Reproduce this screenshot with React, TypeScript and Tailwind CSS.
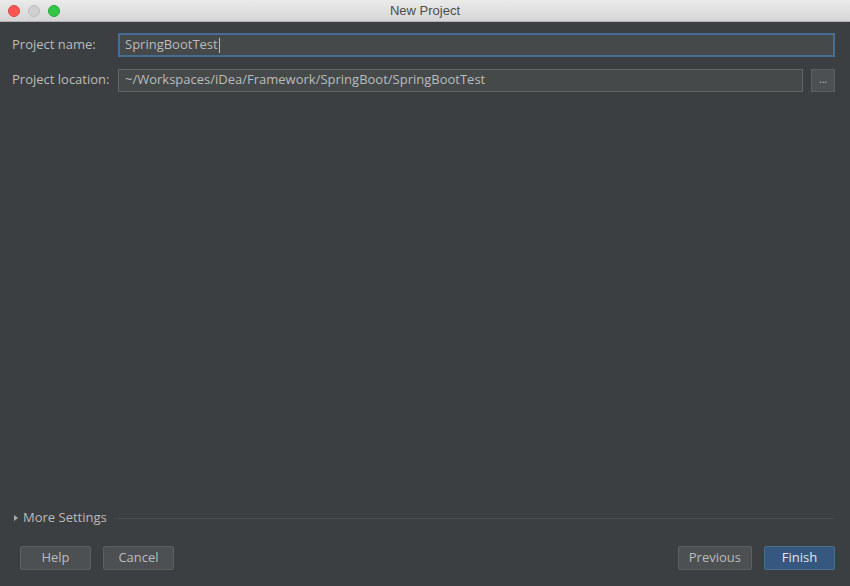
import React from "react";

const TrafficLights = () => (
  <div className="flex items-center gap-[8px] pl-[8px]">
    <span className="block w-[12px] h-[12px] rounded-full bg-[#fc5753] border border-[#df4744]" />
    <span className="block w-[12px] h-[12px] rounded-full bg-[#d0d0d0] border border-[#bdbdbd]" />
    <span className="block w-[12px] h-[12px] rounded-full bg-[#33c748] border border-[#27aa35]" />
  </div>
);

const Button = ({ label, primary }: { label: string; primary?: boolean }) => (
  <button
    className={
      primary
        ? "h-[24px] px-[10px] min-w-[71px] rounded-[2px] border border-[#4c708c] bg-[#365880] text-[#e4e4e4] text-[13px]"
        : "h-[24px] px-[10px] min-w-[71px] rounded-[2px] border border-[#5e6060] bg-[#4c5052] text-[#bbbbbb] text-[13px]"
    }
  >
    {label}
  </button>
);

export default function App() {
  return (
    <div className="w-[850px] h-[586px] flex flex-col bg-[#3c3f41] font-['Open_Sans',sans-serif] text-[13px] text-[#bbbbbb] overflow-hidden">
      <header className="h-[22px] flex items-center relative bg-gradient-to-b from-[#ebebeb] to-[#d5d5d5] border-b border-[#b1b1b1]">
        <TrafficLights />
        <div className="absolute inset-0 flex items-center justify-center text-[13px] text-[#4d4d4d] font-['Liberation_Sans',sans-serif] pointer-events-none">
          New Project
        </div>
      </header>

      <main className="flex-1 flex flex-col px-[12px] pt-[11px]">
        <div className="flex items-center h-[24px]">
          <label className="w-[106px] shrink-0">Project name:</label>
          <div className="flex-1 h-[24px] mr-[3px] border-2 border-[#466d94] bg-[#45494a] flex items-center px-[5px] text-[#bbbbbb]">
            SpringBootTest<span className="inline-block w-px h-[15px] bg-[#bbbbbb] ml-px" />
          </div>
        </div>

        <div className="flex items-center h-[24px] mt-[11px]">
          <label className="w-[106px] shrink-0">Project location:</label>
          <div className="flex-1 h-[23px] border border-[#646464] bg-[#45494a] flex items-center px-[6px]">
            ~/Workspaces/iDea/Framework/SpringBoot/SpringBootTest
          </div>
          <button className="ml-[8px] mr-[3px] w-[24px] h-[23px] border border-[#5e6060] bg-[#4c5052] text-[10px] leading-none text-[#bbbbbb] flex items-center justify-center pb-[3px]">
            ...
          </button>
        </div>

        <div className="flex-1" />

        <div className="flex items-center h-[16px] mb-[20px]">
          <svg width="8" height="8" viewBox="0 0 8 8" className="mr-[3px]">
            <path d="M2 1 L6 4 L2 7 Z" fill="#a9a9a9" />
          </svg>
          <span className="text-[#bbbbbb]">More Settings</span>
          <div className="flex-1 ml-[6px] mr-[4px] h-px bg-[#555859] border-b border-[#4a4d4f]" />
        </div>

        <div className="flex items-center pl-[8px] pr-[3px] mb-[16px]">
          <Button label="Help" />
          <div className="w-[12px]" />
          <Button label="Cancel" />
          <div className="flex-1" />
          <Button label="Previous" />
          <div className="w-[12px]" />
          <Button label="Finish" primary />
        </div>
      </main>
    </div>
  );
}
